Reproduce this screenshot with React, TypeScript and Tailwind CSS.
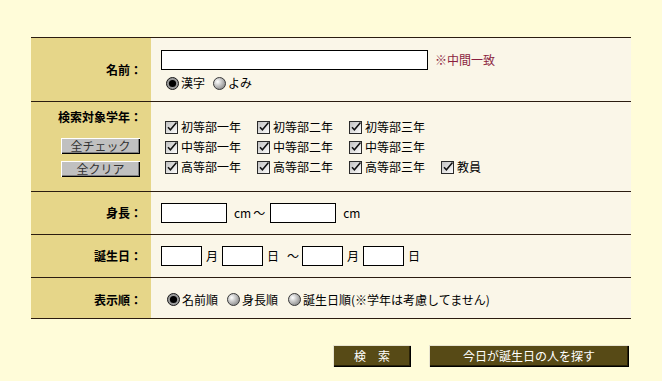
import React from "react";

const font = { fontFamily: '"Noto Sans CJK JP", "Noto Sans", sans-serif' };

function Check() {
  return (
    <svg width="13" height="13" viewBox="0 0 13 13" className="shrink-0">
      <defs>
        <linearGradient id="cbg" x1="0" y1="0" x2="1" y2="1">
          <stop offset="0" stopColor="#bdbdbd" />
          <stop offset="1" stopColor="#ffffff" />
        </linearGradient>
      </defs>
      <rect x="0.5" y="0.5" width="12" height="12" fill="url(#cbg)" stroke="#2a2a2a" />
      <path d="M3 6.2 L5.4 8.8 L11.5 1.5" stroke="#111" strokeWidth="1.5" fill="none" />
    </svg>
  );
}

function Radio({ on }: { on?: boolean }) {
  return (
    <svg width="13" height="13" viewBox="0 0 13 13" className="shrink-0">
      <defs>
        <radialGradient id="rg" cx="0.35" cy="0.35" r="0.7">
          <stop offset="0" stopColor="#ffffff" />
          <stop offset="1" stopColor="#8a8a8a" />
        </radialGradient>
      </defs>
      {on ? (
        <>
          <circle cx="6.5" cy="6.5" r="6" fill="#9a9a9a" stroke="#1a1a1a" />
          <circle cx="6.5" cy="6.5" r="3.6" fill="#000" />
        </>
      ) : (
        <circle cx="6.5" cy="6.5" r="6" fill="url(#rg)" stroke="#3a3a3a" />
      )}
    </svg>
  );
}

function Box({ w }: { w: string }) {
  return <div className={`${w} h-[20px] bg-white border border-black shrink-0`} />;
}

const grades = [
  ["初等部一年", "初等部二年", "初等部三年"],
  ["中等部一年", "中等部二年", "中等部三年"],
  ["高等部一年", "高等部二年", "高等部三年", "教員"],
];

export default function App() {
  return (
    <div className="min-h-[381px] w-[662px] bg-[#fffcd9] pt-[37px] text-[12px] leading-[14px] text-black" style={font}>
      <div className="ml-[31px] w-[600px] border-t border-[#2b1c10]">
        {/* 名前 */}
        <div className="flex h-[64px] border-b border-[#2b1c10]">
          <div className="w-[120px] bg-[#e6d689] flex items-center justify-end pr-[9px] font-bold">名前：</div>
          <div className="flex-1 bg-[#faf6e8] pl-[10px] pt-[12px]">
            <div className="flex items-center h-[20px]">
              <Box w="w-[267px]" />
              <span className="ml-[7px] text-[#8b1e3f]">※中間一致</span>
            </div>
            <div className="flex items-center h-[14px] mt-[6px]">
              <span className="ml-[5px]"><Radio on /></span>
              <span className="ml-[2px]">漢字</span>
              <span className="ml-[8px]"><Radio /></span>
              <span className="ml-[2px]">よみ</span>
            </div>
          </div>
        </div>
        {/* 検索対象学年 */}
        <div className="flex h-[90px] border-b border-[#2b1c10]">
          <div className="w-[120px] bg-[#e6d689] flex flex-col items-end pr-[9px] pt-[8px]">
            <div className="font-bold">検索対象学年：</div>
            <button className="mt-[14px] mr-[2px] w-[79px] h-[16px] bg-[#c0c0c0] text-[#333] text-[12px] leading-[14px] shadow-[inset_1px_1px_0_#ffffff,inset_-1px_-1px_0_#000000,inset_-2px_-2px_0_#808080]">全チェック</button>
            <button className="mt-[7px] mr-[2px] w-[79px] h-[16px] bg-[#c0c0c0] text-[#333] text-[12px] leading-[14px] shadow-[inset_1px_1px_0_#ffffff,inset_-1px_-1px_0_#000000,inset_-2px_-2px_0_#808080]">全クリア</button>
          </div>
          <div className="flex-1 bg-[#faf6e8] pl-[10px] pt-[15px]">
            {grades.map((row, i) => (
              <div key={i} className="flex h-[20px] items-center">
                {row.map((g) => (
                  <div key={g} className="w-[92px] flex items-center">
                    <span className="ml-[4px]"><Check /></span>
                    <span className="ml-[3px]">{g}</span>
                  </div>
                ))}
              </div>
            ))}
          </div>
        </div>
        {/* 身長 */}
        <div className="flex h-[43px] border-b border-[#2b1c10]">
          <div className="w-[120px] bg-[#e6d689] flex items-center justify-end pr-[9px] font-bold">身長：</div>
          <div className="flex-1 bg-[#faf6e8] pl-[10px] flex items-center">
            <Box w="w-[66px]" />
            <span className="ml-[7px]">cm</span>
            <span className="ml-[2px]">〜</span>
            <span className="ml-[5px]"><Box w="w-[66px]" /></span>
            <span className="ml-[7px]">cm</span>
          </div>
        </div>
        {/* 誕生日 */}
        <div className="flex h-[43px] border-b border-[#2b1c10]">
          <div className="w-[120px] bg-[#e6d689] flex items-center justify-end pr-[9px] font-bold">誕生日：</div>
          <div className="flex-1 bg-[#faf6e8] pl-[10px] flex items-center">
            <Box w="w-[41px]" />
            <span className="ml-[4px]">月</span>
            <span className="ml-[4px]"><Box w="w-[41px]" /></span>
            <span className="ml-[4px]">日</span>
            <span className="ml-[8px]">〜</span>
            <span className="ml-[3px]"><Box w="w-[41px]" /></span>
            <span className="ml-[4px]">月</span>
            <span className="ml-[4px]"><Box w="w-[41px]" /></span>
            <span className="ml-[4px]">日</span>
          </div>
        </div>
        {/* 表示順 */}
        <div className="flex h-[41px] border-b border-[#2b1c10]">
          <div className="w-[120px] bg-[#e6d689] flex items-center justify-end pr-[9px] pt-[3px] font-bold">表示順：</div>
          <div className="flex-1 bg-[#faf6e8] pl-[10px] pt-[3px] flex items-center">
            <span className="ml-[6px]"><Radio on /></span>
            <span className="ml-[2px]">名前順</span>
            <span className="ml-[9px]"><Radio /></span>
            <span className="ml-[2px]">身長順</span>
            <span className="ml-[10px]"><Radio /></span>
            <span className="ml-[2px]">誕生日順(※学年は考慮してません)</span>
          </div>
        </div>
      </div>
      <div className="w-[629px] flex justify-end mt-[26px] gap-[18px]">
        <button className="w-[78px] h-[22px] bg-[#574a16] text-white text-[12px] leading-[14px] shadow-[inset_1px_1px_0_#e8e4d0,inset_-1px_-1px_0_#000000,inset_-2px_-2px_0_#2a2208]">検　索</button>
        <button className="w-[200px] h-[22px] bg-[#574a16] text-white text-[12px] leading-[14px] shadow-[inset_1px_1px_0_#e8e4d0,inset_-1px_-1px_0_#000000,inset_-2px_-2px_0_#2a2208]">今日が誕生日の人を探す</button>
      </div>
    </div>
  );
}
